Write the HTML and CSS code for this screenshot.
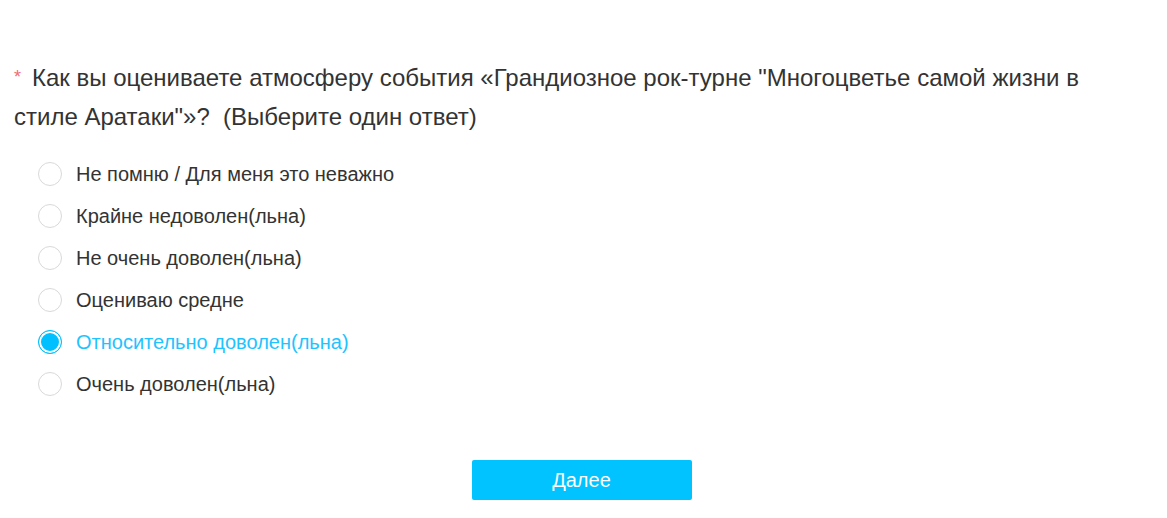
FILE: index.html
```html
<!DOCTYPE html>
<html lang="ru">
<head>
<meta charset="utf-8">
<link rel="stylesheet" href="styles.css">
</head>
<body>
<div class="page">
  <div class="question">
    <div class="title"><span class="req">*</span><span class="qtext">Как вы оцениваете атмосферу события «Грандиозное рок-турне "Многоцветье самой жизни в стиле Аратаки"»?&nbsp; (Выберите один ответ)</span></div>
    <ul class="options">
      <li class="option"><span class="radio"></span><span class="label">Не помню / Для меня это неважно</span></li>
      <li class="option"><span class="radio"></span><span class="label">Крайне недоволен(льна)</span></li>
      <li class="option"><span class="radio"></span><span class="label">Не очень доволен(льна)</span></li>
      <li class="option"><span class="radio"></span><span class="label">Оцениваю средне</span></li>
      <li class="option checked"><span class="radio"></span><span class="label">Относительно доволен(льна)</span></li>
      <li class="option"><span class="radio"></span><span class="label">Очень доволен(льна)</span></li>
    </ul>
  </div>
  <div class="actions">
    <button class="next">Далее</button>
  </div>
</div>
</body>
</html>
```

FILE: styles.css
```css
html, body {
  margin: 0;
  padding: 0;
  background: #fff;
}
body {
  font-family: "Liberation Sans", Arial, sans-serif;
  color: #333;
}
.page {
  padding: 58px 0 0 0;
}
.question {
  padding: 0 14px;
}
.title {
  font-size: 24px;
  line-height: 39px;
  color: #333;
  padding-right: 50px;
}
.req {
  color: #f36a75;
  font-size: 18px;
  line-height: 1;
  vertical-align: 3px;
  margin-right: 11px;
}
.options {
  list-style: none;
  margin: 17px 0 0 0;
  padding: 0 0 0 24px;
}
.option {
  display: flex;
  align-items: center;
  height: 42px;
  font-size: 20px;
}
.radio {
  box-sizing: border-box;
  width: 24px;
  height: 24px;
  border: 1px solid #d9d9d9;
  border-radius: 50%;
  margin-right: 14px;
  flex: none;
  background: #fff;
}
.option.checked .radio {
  border-color: #00c0ff;
  background: #00c0ff;
  box-shadow: inset 0 0 0 2px #fff;
}
.option.checked .label {
  color: #1ec3ff;
}
.actions {
  display: flex;
  justify-content: center;
  padding: 55px 4px 0 0;
}
.next {
  width: 220px;
  height: 40px;
  border: none;
  border-radius: 2px;
  background: #00c3ff;
  color: #fff;
  font-family: "Liberation Sans", Arial, sans-serif;
  font-size: 20px;
  cursor: pointer;
}
```
